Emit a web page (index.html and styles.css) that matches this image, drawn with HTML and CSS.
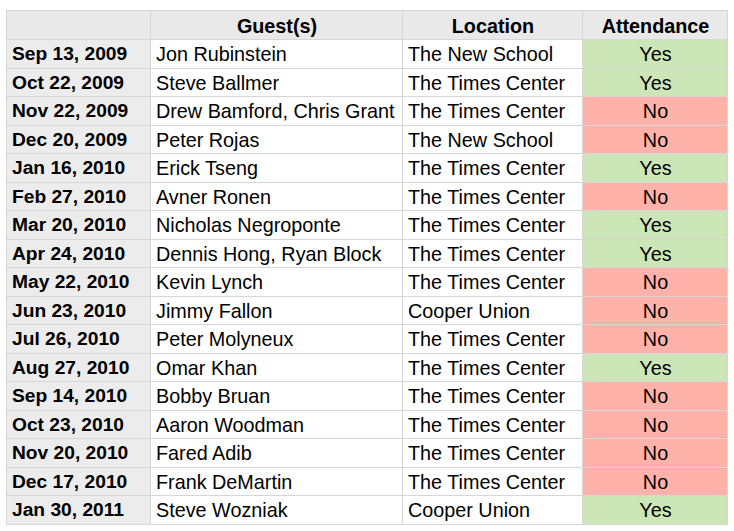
FILE: index.html
```html
<!DOCTYPE html>
<html>
<head>
<meta charset="utf-8">
<link rel="stylesheet" href="styles.css">
</head>
<body>
<table class="sheet">
  <colgroup>
    <col class="c-date"><col class="c-guest"><col class="c-loc"><col class="c-att">
  </colgroup>
  <thead>
    <tr><th class="corner"></th><th>Guest(s)</th><th>Location</th><th>Attendance</th></tr>
  </thead>
  <tbody>
    <tr><th class="date">Sep 13, 2009</th><td>Jon Rubinstein</td><td>The New School</td><td class="yes">Yes</td></tr>
    <tr><th class="date">Oct 22, 2009</th><td>Steve Ballmer</td><td>The Times Center</td><td class="yes">Yes</td></tr>
    <tr><th class="date">Nov 22, 2009</th><td>Drew Bamford, Chris Grant</td><td>The Times Center</td><td class="no">No</td></tr>
    <tr><th class="date">Dec 20, 2009</th><td>Peter Rojas</td><td>The New School</td><td class="no">No</td></tr>
    <tr><th class="date">Jan 16, 2010</th><td>Erick Tseng</td><td>The Times Center</td><td class="yes">Yes</td></tr>
    <tr><th class="date">Feb 27, 2010</th><td>Avner Ronen</td><td>The Times Center</td><td class="no">No</td></tr>
    <tr><th class="date">Mar 20, 2010</th><td>Nicholas Negroponte</td><td>The Times Center</td><td class="yes">Yes</td></tr>
    <tr><th class="date">Apr 24, 2010</th><td>Dennis Hong, Ryan Block</td><td>The Times Center</td><td class="yes">Yes</td></tr>
    <tr><th class="date">May 22, 2010</th><td>Kevin Lynch</td><td>The Times Center</td><td class="no">No</td></tr>
    <tr><th class="date">Jun 23, 2010</th><td>Jimmy Fallon</td><td>Cooper Union</td><td class="no">No</td></tr>
    <tr><th class="date">Jul 26, 2010</th><td>Peter Molyneux</td><td>The Times Center</td><td class="no">No</td></tr>
    <tr><th class="date">Aug 27, 2010</th><td>Omar Khan</td><td>The Times Center</td><td class="yes">Yes</td></tr>
    <tr><th class="date">Sep 14, 2010</th><td>Bobby Bruan</td><td>The Times Center</td><td class="no">No</td></tr>
    <tr><th class="date">Oct 23, 2010</th><td>Aaron Woodman</td><td>The Times Center</td><td class="no">No</td></tr>
    <tr><th class="date">Nov 20, 2010</th><td>Fared Adib</td><td>The Times Center</td><td class="no">No</td></tr>
    <tr><th class="date">Dec 17, 2010</th><td>Frank DeMartin</td><td>The Times Center</td><td class="no">No</td></tr>
    <tr><th class="date">Jan 30, 2011</th><td>Steve Wozniak</td><td>Cooper Union</td><td class="yes">Yes</td></tr>
  </tbody>
</table>
</body>
</html>
```
FILE: styles.css
```css
html, body {
  margin: 0;
  background: #ffffff;
}
body {
  padding: 10px 0 0 6px;
  font-family: "Liberation Sans", Arial, sans-serif;
  font-size: 19.8px;
  color: #000;
}
.sheet {
  border-collapse: collapse;
  table-layout: fixed;
  width: 721px;
}
.c-date { width: 144px; }
.c-guest { width: 252px; }
.c-loc { width: 180px; }
.c-att { width: 145px; }
.sheet th, .sheet td {
  border: 1px solid #d6d6d6;
  padding: 1px 4px 0 5px;
  height: 26.5px;
  line-height: 26px;
  white-space: nowrap;
  overflow: hidden;
  text-align: left;
  font-weight: normal;
}
.sheet thead th {
  background: #e9e9e9;
  font-weight: bold;
  text-align: center;
  height: 27px;
}
.sheet th.date {
  background: #ececec;
  font-weight: bold;
  font-size: 19.2px;
}
.sheet td.yes, .sheet td.no {
  text-align: center;
}
.sheet td.yes { background: #cde6b7; }
.sheet td.no { background: #ffb2aa; }
```
